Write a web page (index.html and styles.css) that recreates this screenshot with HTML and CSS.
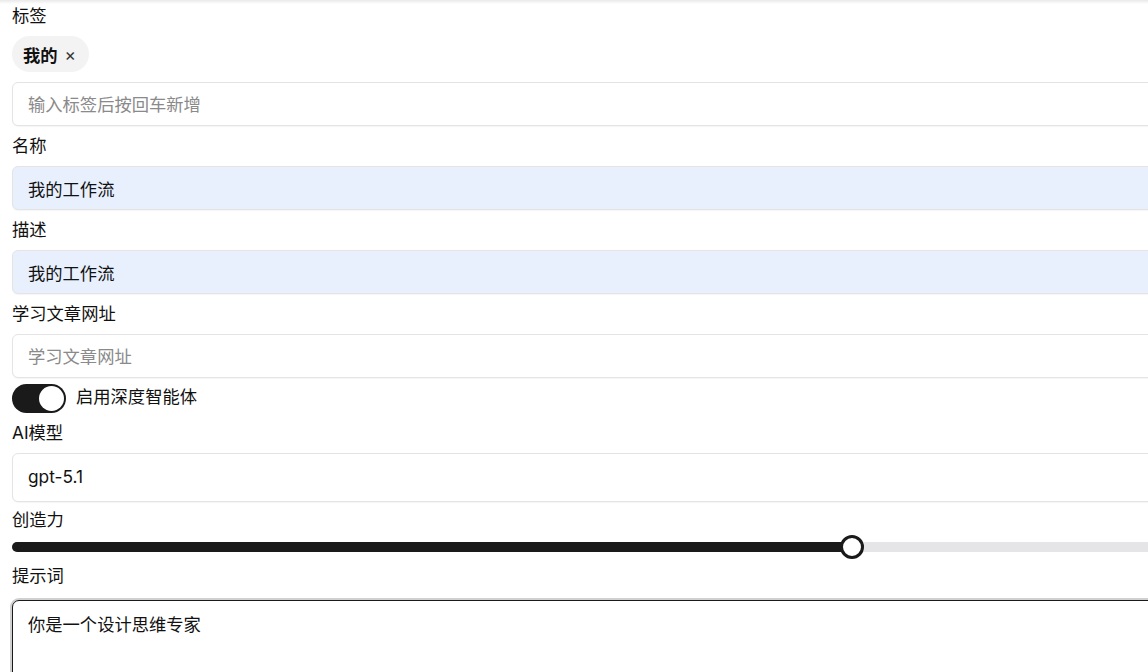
FILE: index.html
```html
<!DOCTYPE html>
<html lang="zh">
<head>
<meta charset="utf-8">
<link rel="stylesheet" href="styles.css">
</head>
<body>
<form class="form">
  <label class="label">标签</label>
  <div class="tags"><span class="chip"><b>我的</b><span class="x">×</span></span></div>
  <input class="input tag-input" placeholder="输入标签后按回车新增">

  <label class="label">名称</label>
  <input class="input filled" value="我的工作流">

  <label class="label">描述</label>
  <input class="input filled" value="我的工作流">

  <label class="label">学习文章网址</label>
  <input class="input" placeholder="学习文章网址">

  <div class="switch-row">
    <span class="switch"><span class="knob"></span></span>
    <span class="switch-text">启用深度智能体</span>
  </div>

  <label class="label">AI模型</label>
  <div class="select">gpt-5.1</div>

  <label class="label slider-label">创造力</label>
  <div class="slider">
    <div class="fill" style="width: 840px"></div>
    <div class="thumb"></div>
  </div>

  <label class="label">提示词</label>
  <div class="textarea">你是一个设计思维专家</div>
</form>
</body>
</html>
```

FILE: styles.css
```css
html, body {
  margin: 0;
  padding: 0;
  overflow: hidden;
  height: 100%;
}
body {
  font-family: Inter, "Noto Sans CJK SC", sans-serif;
  font-size: 17.3px;
  color: #111;
  background: linear-gradient(#e9e9e9, #ffffff 4px) no-repeat;
  background-color: #fff;
}
.form {
  display: flex;
  flex-direction: column;
  width: 1190px;
  padding: 4px 12px 0;
}
.label {
  display: block;
  line-height: 24px;
  height: 24px;
  margin-bottom: 8px;
}
.slider-label {
  margin-bottom: 10px;
}
.tags {
  display: flex;
  margin-bottom: 10px;
}
.chip {
  display: inline-flex;
  align-items: center;
  gap: 7px;
  height: 36px;
  padding: 0 13px 0 11px;
  border-radius: 18px;
  background: #f3f3f4;
}
.chip b {
  font-weight: 700;
}
.chip .x {
  color: #333;
}
.input, .select, .textarea {
  box-sizing: border-box;
  width: 100%;
  font: inherit;
  color: #111;
  border: 1px solid #e4e4e4;
  border-radius: 6px;
  padding: 0 15px;
  background: #fff;
  box-shadow: 0 1px 1px rgba(0,0,0,0.04);
  outline: none;
}
.input {
  height: 44px;
  margin-bottom: 8px;
}
.input::placeholder {
  color: #8a8a8a;
}
.filled {
  background: #e8f0fe;
}
.switch-row {
  display: flex;
  align-items: center;
  gap: 10px;
  height: 29px;
  margin-top: -2px;
  margin-bottom: 8px;
}
.switch-text {
  line-height: 24px;
  margin-top: -3px;
}
.switch {
  display: flex;
  justify-content: flex-end;
  align-items: center;
  box-sizing: border-box;
  width: 54px;
  height: 29px;
  border-radius: 15px;
  background: #1a1a1a;
  padding: 2px;
}
.knob {
  width: 25px;
  height: 25px;
  border-radius: 50%;
  background: #fff;
}
.select {
  height: 49px;
  display: flex;
  align-items: center;
  padding-bottom: 2px;
  margin-bottom: 6px;
}
.slider {
  position: relative;
  height: 10px;
  border-radius: 5px;
  background: #e5e5e8;
  margin: 0 0 12px;
  width: 1148px;
}
.slider .fill {
  height: 10px;
  border-radius: 5px;
  background: #1a1a1a;
}
.slider .thumb {
  position: absolute;
  left: 828px;
  top: -7px;
  width: 18px;
  height: 18px;
  border: 3px solid #1a1a1a;
  border-radius: 50%;
  background: #fff;
}
.textarea {
  height: 120px;
  margin-top: 4px;
  padding-top: 12px;
  line-height: 24px;
  border: 1px solid #1a1a1a;
  box-shadow: 0 0 0 2px #d0d0d0;
  border-radius: 7px;
}
```
